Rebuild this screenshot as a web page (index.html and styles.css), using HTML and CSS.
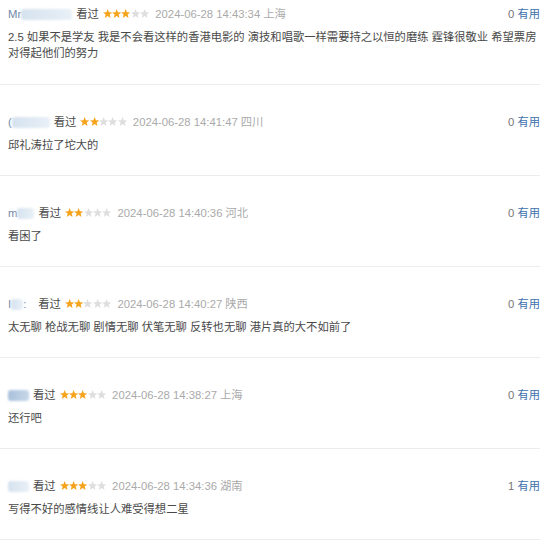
FILE: index.html
```html
<!DOCTYPE html>
<html lang="zh-CN">
<head>
  <meta charset="UTF-8" />
  <title>短评</title>
  <link rel="stylesheet" href="styles.css">
</head>
<body>
  <!-- 星星图形 -->
  <svg class="defs" width="0" height="0">
    <symbol id="star" viewBox="0 0 10 10">
      <polygon points="5,0 6.35,3.45 10,3.65 7.15,5.95 8.1,9.6 5,7.55 1.9,9.6 2.85,5.95 0,3.65 3.65,3.45" />
    </symbol>
  </svg>

  <div class="comments">
    <div class="comment first">
      <div class="comment-info">
        <span class="name"><span class="initial">Mr</span><i class="blur w51"></i></span>
        <span class="watched">看过</span>
        <span class="rating r3">
          <svg class="s"><use href="#star"/></svg><svg class="s"><use href="#star"/></svg><svg class="s"><use href="#star"/></svg><svg class="s"><use href="#star"/></svg><svg class="s"><use href="#star"/></svg>
        </span>
        <span class="time">2024-06-28 14:43:34</span>
        <span class="location">上海</span>
        <span class="votes"><span class="count">0</span> <a class="useful">有用</a></span>
      </div>
      <p class="content">2.5 如果不是学友 我是不会看这样的香港电影的 演技和唱歌一样需要持之以恒的磨练 霆锋很敬业 希望票房对得起他们的努力</p>
    </div>

    <div class="comment">
      <div class="comment-info">
        <span class="name"><span class="initial">(</span><i class="blur w38"></i></span>
        <span class="watched">看过</span>
        <span class="rating r2">
          <svg class="s"><use href="#star"/></svg><svg class="s"><use href="#star"/></svg><svg class="s"><use href="#star"/></svg><svg class="s"><use href="#star"/></svg><svg class="s"><use href="#star"/></svg>
        </span>
        <span class="time">2024-06-28 14:41:47</span>
        <span class="location">四川</span>
        <span class="votes"><span class="count">0</span> <a class="useful">有用</a></span>
      </div>
      <p class="content">邱礼涛拉了坨大的</p>
    </div>

    <div class="comment">
      <div class="comment-info">
        <span class="name"><span class="initial">m</span><i class="blur w17"></i></span>
        <span class="watched">看过</span>
        <span class="rating r2">
          <svg class="s"><use href="#star"/></svg><svg class="s"><use href="#star"/></svg><svg class="s"><use href="#star"/></svg><svg class="s"><use href="#star"/></svg><svg class="s"><use href="#star"/></svg>
        </span>
        <span class="time">2024-06-28 14:40:36</span>
        <span class="location">河北</span>
        <span class="votes"><span class="count">0</span> <a class="useful">有用</a></span>
      </div>
      <p class="content">看困了</p>
    </div>

    <div class="comment">
      <div class="comment-info">
        <span class="name"><span class="initial">I</span><i class="blur w12"></i><span class="initial">:</span><i class="gap"></i></span>
        <span class="watched">看过</span>
        <span class="rating r2">
          <svg class="s"><use href="#star"/></svg><svg class="s"><use href="#star"/></svg><svg class="s"><use href="#star"/></svg><svg class="s"><use href="#star"/></svg><svg class="s"><use href="#star"/></svg>
        </span>
        <span class="time">2024-06-28 14:40:27</span>
        <span class="location">陕西</span>
        <span class="votes"><span class="count">0</span> <a class="useful">有用</a></span>
      </div>
      <p class="content">太无聊 枪战无聊 剧情无聊 伏笔无聊 反转也无聊 港片真的大不如前了</p>
    </div>

    <div class="comment">
      <div class="comment-info">
        <span class="name"><i class="blur w21 strong"></i></span>
        <span class="watched">看过</span>
        <span class="rating r3">
          <svg class="s"><use href="#star"/></svg><svg class="s"><use href="#star"/></svg><svg class="s"><use href="#star"/></svg><svg class="s"><use href="#star"/></svg><svg class="s"><use href="#star"/></svg>
        </span>
        <span class="time">2024-06-28 14:38:27</span>
        <span class="location">上海</span>
        <span class="votes"><span class="count">0</span> <a class="useful">有用</a></span>
      </div>
      <p class="content">还行吧</p>
    </div>

    <div class="comment">
      <div class="comment-info">
        <span class="name"><i class="blur w21"></i></span>
        <span class="watched">看过</span>
        <span class="rating r3">
          <svg class="s"><use href="#star"/></svg><svg class="s"><use href="#star"/></svg><svg class="s"><use href="#star"/></svg><svg class="s"><use href="#star"/></svg><svg class="s"><use href="#star"/></svg>
        </span>
        <span class="time">2024-06-28 14:34:36</span>
        <span class="location">湖南</span>
        <span class="votes"><span class="count">1</span> <a class="useful">有用</a></span>
      </div>
      <p class="content">写得不好的感情线让人难受得想二星</p>
    </div>
  </div>
</body>
</html>
```

FILE: styles.css
```css
body {
  margin: 0;
  padding: 0;
  background-color: #fff;
  font-family: 'Liberation Sans', 'Noto Sans CJK SC', sans-serif;
  font-size: 11.3px;
  color: #494949;
}

.defs {
  position: absolute;
  width: 0;
  height: 0;
}

.comments {
  width: 540px;
}

.comment {
  padding: 29px 0 22px 8px;
  border-top: 1px solid #ececec;
}

/* 第一条评论被截掉了上半部分 */
.comment.first {
  padding-top: 6px;
  border-top: none;
  border-bottom: 1px solid #ececec;
  padding-bottom: 23px;
}

.comment.first + .comment {
  border-top: none;
}

.comment:last-child {
  border-bottom: 1px solid #ececec;
}

.comment-info {
  display: flex;
  align-items: center;
  height: 16px;
  line-height: 16px;
  white-space: nowrap;
}

.name {
  display: inline-flex;
  align-items: center;
  color: #7b95b4;
  margin-right: 4px;
}

.name .initial {
  color: #6f88a8;
}

.blur {
  display: inline-block;
  height: 11px;
  background: linear-gradient(90deg, #d5e2ee, #e9f0f7);
  filter: blur(1.2px);
  border-radius: 3px;
}

.blur.strong {
  background: linear-gradient(90deg, #a9c1dc, #c7d7e8);
}

.w12 { width: 12px; }
.w17 { width: 17px; }
.w21 { width: 21px; }
.w38 { width: 38px; }
.w51 { width: 51px; }

.gap {
  display: inline-block;
  width: 8px;
}

.watched {
  color: #494949;
  margin-right: 4px;
}

.rating {
  display: inline-flex;
  align-items: center;
  margin-right: 6px;
}

.rating .s {
  width: 9.3px;
  height: 9.3px;
  fill: #dedede;
}

.rating.r2 .s:nth-child(-n+2),
.rating.r3 .s:nth-child(-n+3) {
  fill: #f6a31c;
}

.time,
.location {
  color: #aaa;
}

.location {
  margin-left: 3px;
}

.votes {
  margin-left: auto;
  color: #777;
}

.useful {
  color: #3e72ad;
  text-decoration: none;
}

.content {
  margin: 7px 0 0;
  line-height: 16px;
  color: #494949;
  word-wrap: break-word;
}
```
